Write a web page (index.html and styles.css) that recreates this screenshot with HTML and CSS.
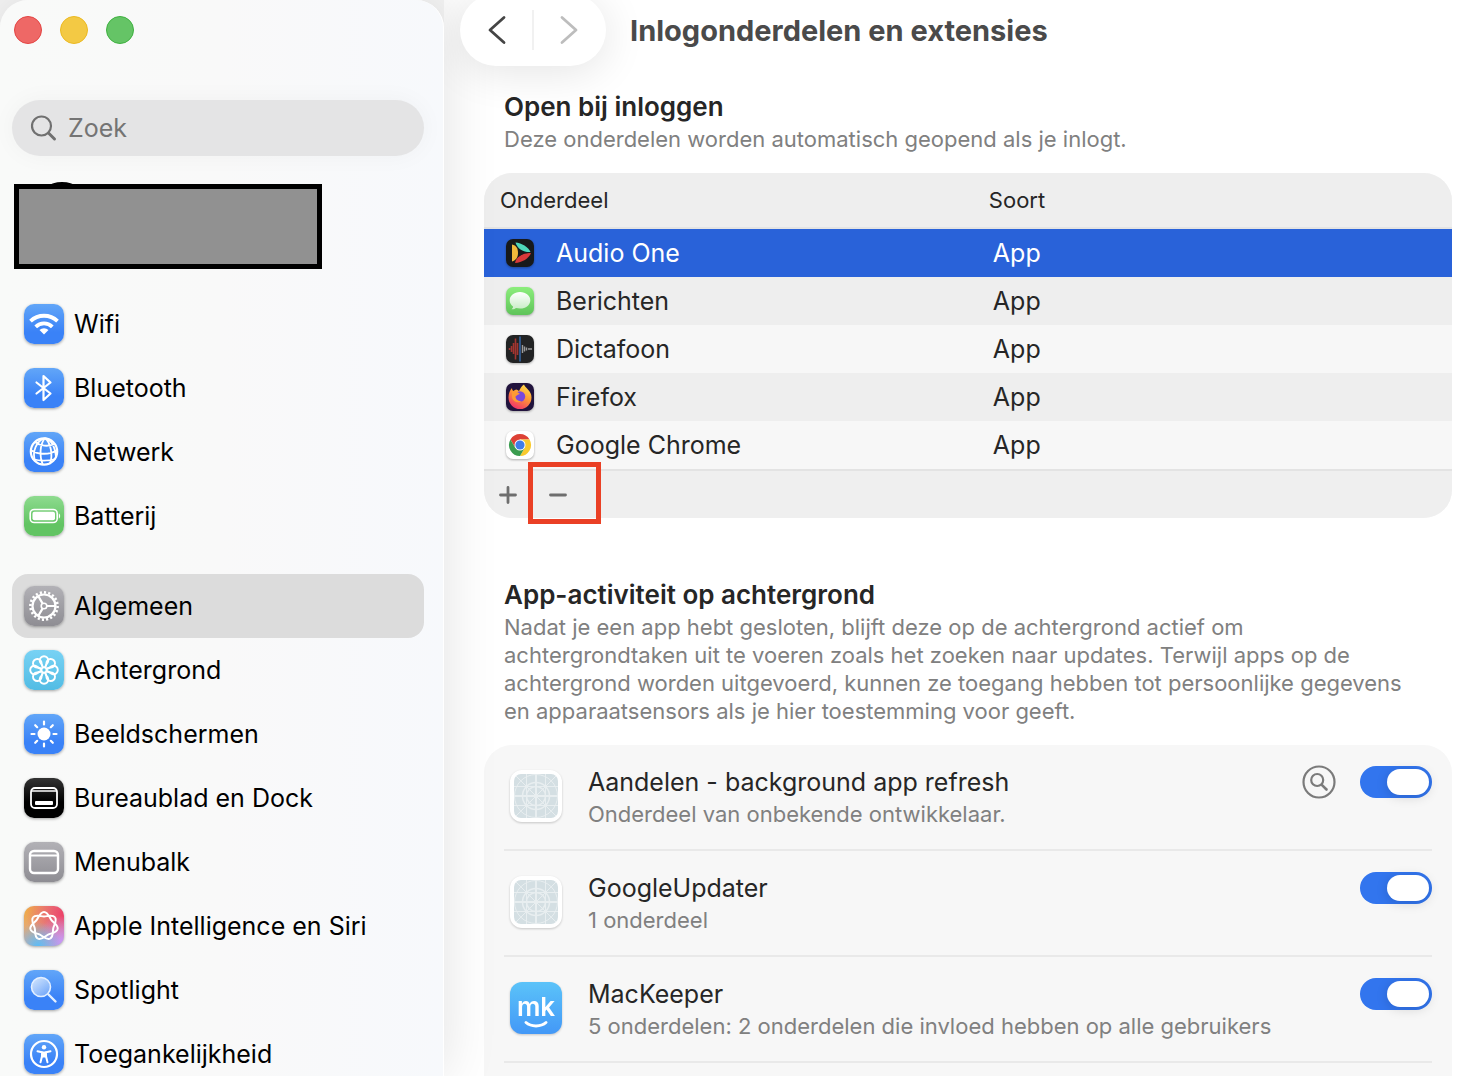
FILE: index.html
```html
<!DOCTYPE html>
<html lang="nl">
  <head>
    <meta charset="UTF-8" />
    <meta name="viewport" content="width=device-width, initial-scale=1.0" />
    <title>Inlogonderdelen en extensies</title>
    <link rel="stylesheet" href="styles.css">
  </head>
  <body>
    <aside class="sidebar">
      <div class="window-buttons">
        <button class="dot red" aria-label="Sluit"></button>
        <button class="dot yellow" aria-label="Minimaliseer"></button>
        <button class="dot green" aria-label="Vergroot"></button>
      </div>

      <label class="search">
        <svg width="28" height="28" viewBox="0 0 28 28" fill="none" stroke="#707070" stroke-width="2.200" stroke-linecap="round">
          <circle cx="11.500" cy="12" r="9.500" />
          <path d="M18.500 19l6 6" stroke-width="3" />
        </svg>
        <input type="search" placeholder="Zoek" aria-label="Zoek" />
      </label>

      <div class="account"></div>

      <nav>
        <ul class="menu">
          <li><a href="#wifi">
            <svg class="tile blue" viewBox="0 0 40 40" fill="none" stroke="#fff" stroke-width="3.800">
              <path d="M6.500 17.200a19.500 19.500 0 0 1 27 0M11.700 22.800a12 12 0 0 1 16.600 0" />
              <path d="M20 30.500l-4.500-4.500a6.500 6.500 0 0 1 9 0z" fill="#fff" stroke="none" />
            </svg>
            Wifi</a></li>
          <li><a href="#bluetooth">
            <svg class="tile blue" viewBox="0 0 40 40" fill="none" stroke="#fff" stroke-width="2.200" stroke-linejoin="round" stroke-linecap="round">
              <path d="M12.500 14.500l14 11-7 6.500v-24l7 6.500-14 11" />
            </svg>
            Bluetooth</a></li>
          <li><a href="#netwerk">
            <svg class="tile blue" viewBox="0 0 40 40" fill="none" stroke="#fff" stroke-width="1.800">
              <circle cx="20" cy="19.500" r="13.200" stroke-width="2.200" />
              <path d="M21 6c-5 6-6 18-2 27M21 6c-9 3-13 14-10 23M21 6c6 5 8 17 5 26M21 6c6 2 10 8 11 19M11 10c5 4 13 5 20 2M6.500 18c8 5 19 5 27 0M8.500 27c7 2 16 2 23 0" />
            </svg>
            Netwerk</a></li>
          <li><a href="#batterij">
            <svg class="tile lime" viewBox="0 0 40 40" fill="none" stroke="#fff">
              <rect x="6.200" y="13.500" width="27" height="13" rx="4" stroke-width="1.600" />
              <rect x="8.500" y="15.800" width="22.500" height="8.400" rx="2" fill="#fff" stroke="none" />
              <path d="M34.800 17.500v5c1.800-.5 1.800-4.500 0-5z" fill="#fff" stroke="none" />
            </svg>
            Batterij</a></li>
        </ul>

        <ul class="menu">
          <li><a href="#algemeen" class="active" aria-current="page">
            <svg class="tile gray" viewBox="0 0 40 40" fill="none" stroke="#fff">
              <circle cx="20" cy="20" r="11.500" stroke-width="2.200" />
              <circle cx="20" cy="20" r="13.600" stroke-width="2.600" pathLength="40" stroke-dasharray="1 1" />
              <circle cx="20" cy="20" r="2.800" stroke-width="1.600" />
              <path d="M23 20h8.500M18.500 17.400l-4.300-7.400M18.500 22.600l-4.300 7.400" stroke-width="2.200" />
            </svg>
            Algemeen</a></li>
          <li><a href="#achtergrond">
            <svg class="tile cyan" viewBox="0 0 40 40" fill="none" stroke="#fff" stroke-width="1.900">
              <g id="petals">
                <path id="petal" d="M20 20l-2.500-6a4.300 4.300 0 1 1 5 0z" />
                <use href="#petal" transform="rotate(45 20 20)" />
                <use href="#petal" transform="rotate(90 20 20)" />
                <use href="#petal" transform="rotate(135 20 20)" />
              </g>
              <use href="#petals" transform="rotate(180 20 20)" />
              <circle cx="20" cy="20" r="2.600" fill="#5fc6ea" />
            </svg>
            Achtergrond</a></li>
          <li><a href="#beeldschermen">
            <svg class="tile blue" viewBox="0 0 40 40" fill="none" stroke="#fff" stroke-width="2.200" stroke-linecap="round">
              <circle cx="20" cy="20" r="6.500" fill="#fff" stroke="none" />
              <path d="M20 7.500v3M20 29.500v3M7.500 20h3M29.500 20h3M11.200 11.200l2 2M26.800 26.800l2 2M11.200 28.800l2-2M26.800 13.200l2-2" />
            </svg>
            Beeldschermen</a></li>
          <li><a href="#dock">
            <svg class="tile black" viewBox="0 0 40 40" fill="none" stroke="#fff" stroke-width="1.800">
              <rect x="7" y="10" width="26" height="20" rx="4" />
              <path d="M7.500 13h25" stroke-width="1.400" />
              <rect x="11" y="23" width="18" height="4" rx="1" fill="#fff" stroke="none" />
            </svg>
            Bureaublad en Dock</a></li>
          <li><a href="#menubalk">
            <svg class="tile gray" viewBox="0 0 40 40" fill="none" stroke="#fff" stroke-width="2.400">
              <rect x="6" y="9" width="28" height="22" rx="4" />
              <path d="M6 13.500h28" stroke-width="2" />
            </svg>
            Menubalk</a></li>
          <li><a href="#siri">
            <svg class="tile siri" viewBox="0 0 40 40" fill="none" stroke="#fff" stroke-width="2">
              <g transform="translate(20 20)">
                <path id="lobe" d="M0-14C4-14 5.560-8.270 7.430-5.920C9.300-3.570 14.540-.78 13.650 3.120" />
                <use href="#lobe" transform="rotate(51.430)" />
                <use href="#lobe" transform="rotate(102.860)" />
                <use href="#lobe" transform="rotate(154.290)" />
                <use href="#lobe" transform="rotate(205.710)" />
                <use href="#lobe" transform="rotate(257.140)" />
                <use href="#lobe" transform="rotate(308.570)" />
              </g>
            </svg>
            Apple Intelligence en Siri</a></li>
          <li><a href="#spotlight">
            <svg class="tile blue" viewBox="0 0 40 40" fill="none" stroke="#e3efff" stroke-linecap="round">
              <defs>
                <linearGradient id="lens" x2="1" y2="1"><stop stop-color="#fff" stop-opacity=".75" /><stop offset="1" stop-color="#fff" stop-opacity=".2" /></linearGradient>
              </defs>
              <circle cx="17" cy="17" r="9.500" fill="url(#lens)" stroke-width="1.600" />
              <path d="M24.500 24.500l7 7" stroke-width="2.400" />
            </svg>
            Spotlight</a></li>
          <li><a href="#toegankelijkheid">
            <svg class="tile blue" viewBox="0 0 40 40" fill="none" stroke="#fff" stroke-width="2" stroke-linecap="round" stroke-linejoin="round">
              <circle cx="20" cy="20" r="13" stroke-width="2.200" />
              <circle cx="20" cy="13.200" r="2.200" fill="#fff" stroke="none" />
              <path d="M13.500 17.200l4.500 1v4l-1.500 6M26.500 17.200l-4.500 1v4l1.500 6" />
              <path d="M17.500 17.500h5l-.5 6h-4z" fill="#fff" stroke="none" />
            </svg>
            Toegankelijkheid</a></li>
        </ul>
      </nav>
    </aside>

    <main class="main">
      <header class="toolbar">
        <div class="history">
          <button aria-label="Vorige">
            <svg width="20" height="30" viewBox="0 0 20 30" fill="none" stroke="#454545" stroke-width="2.800" stroke-linecap="round" stroke-linejoin="round"><path d="M18 2.500L4 15l14 12.500" /></svg>
          </button>
          <button aria-label="Volgende">
            <svg width="20" height="30" viewBox="0 0 20 30" fill="none" stroke="#bdbdbd" stroke-width="2.800" stroke-linecap="round" stroke-linejoin="round"><path d="M2 2.500L16 15L2 27.500" /></svg>
          </button>
        </div>
        <h1>Inlogonderdelen en extensies</h1>
      </header>

      <section class="section">
        <div class="section-head">
          <h2>Open bij inloggen</h2>
          <p>Deze onderdelen worden automatisch geopend als je inlogt.</p>
        </div>
        <div class="login-items">
          <div class="card">
            <table>
              <thead>
                <tr><th class="name-col">Onderdeel</th><th>Soort</th></tr>
              </thead>
              <tbody>
                <tr class="selected">
                  <td><div class="app">
                    <svg class="app-icon" viewBox="0 0 32 32">
                      <rect x="2" y="2" width="28" height="28" rx="7" fill="#17191b" />
                      <path d="M8 7.500c4.500 1 6 4 6 8.500s-2 7-6 8.500z" fill="#f2b93b" />
                      <path d="M11.500 5.500c6 .5 13 4.500 15 9.500-6 .5-13-2.500-15-9.500z" fill="#4fd8bb" />
                      <path d="M27 16c-2 5.500-9 9.500-16 10 1-6.500 8-10 16-10z" fill="#d8393a" />
                      <path d="M14 12.500l6.500 3.500-6.500 4z" fill="#17191b" />
                    </svg>
                    Audio One</div></td>
                  <td>App</td>
                </tr>
                <tr>
                  <td><div class="app">
                    <svg class="app-icon" viewBox="0 0 32 32">
                      <defs>
                        <linearGradient id="msg" x2="0" y2="1"><stop stop-color="#8cee7c" /><stop offset="1" stop-color="#5fc45a" /></linearGradient>
                        <linearGradient id="bubble" x2="0" y2="1"><stop stop-color="#fff" /><stop offset="1" stop-color="#c8edc6" /></linearGradient>
                      </defs>
                      <rect x="2" y="2" width="28" height="28" rx="7" fill="url(#msg)" />
                      <path d="M16 7c-6 0-10.300 3.700-10.300 8.300 0 2.700 1.200 4.800 3.300 6.300.2 1-.5 2-1.500 2.700 1.800.2 3.500-.3 4.500-1.200 1.200.3 2.600.5 4 .5 6 0 10.300-3.700 10.300-8.300S22 7 16 7z" fill="url(#bubble)" />
                    </svg>
                    Berichten</div></td>
                  <td>App</td>
                </tr>
                <tr>
                  <td><div class="app">
                    <svg class="app-icon" viewBox="0 0 32 32" fill="none">
                      <rect x="2" y="2" width="28" height="28" rx="7" fill="#222324" />
                      <path d="M5.500 15v2M7.500 13v6M9.500 10v11M11.500 5.500v21M13.500 10v12" stroke="#a23530" stroke-width="1.600" />
                      <path d="M16 3.500v25" stroke="#3b78c9" stroke-width="1.200" />
                      <path d="M18.500 12v8M20.500 13.500v5M22.500 14.500v3M24 16h4" stroke="#9b9b9b" stroke-width="1.400" />
                    </svg>
                    Dictafoon</div></td>
                  <td>App</td>
                </tr>
                <tr>
                  <td><div class="app">
                    <svg class="app-icon" viewBox="0 0 32 32">
                      <defs>
                        <linearGradient id="fox" x1=".8" x2=".3" y2="1"><stop stop-color="#ffe14d" /><stop offset=".45" stop-color="#ff9a35" /><stop offset="1" stop-color="#f0316b" /></linearGradient>
                      </defs>
                      <rect x="2" y="2" width="28" height="28" rx="7" fill="#21133d" />
                      <path d="M20 3.500c1 3.500 7.500 6 7.500 13A11.500 11.500 0 0 1 16 28 11.500 11.500 0 0 1 4.500 16.500c0-4 1.500-7.500 3.500-9.500 0 1.500.5 2.500 1.500 3 2-2 3.500-2 5.500 0 1.500-3 2.500-5 5-6.500z" fill="url(#fox)" />
                      <circle cx="16" cy="15.500" r="5.200" fill="#7a48dc" />
                      <path d="M8 10.500c3-1 6 .5 8 2.500-2.500.3-3 1.700-4.500 2.500 0 3 3 5 6 4.500-4 3-9.500 0-9.500-4.500z" fill="#ff9a34" />
                    </svg>
                    Firefox</div></td>
                  <td>App</td>
                </tr>
                <tr>
                  <td><div class="app">
                    <svg class="app-icon" viewBox="0 0 32 32">
                      <rect x="2" y="2" width="28" height="28" rx="7" fill="#fff" />
                      <g transform="translate(16 16)">
                        <path d="M0-5.500H9.530A11 11 0 0 0-9.530-5.500L-4.760 2.750z" fill="#dd4135" />
                        <path d="M0-5.500H9.530A11 11 0 0 0-9.530-5.500L-4.760 2.750z" fill="#f9ca2e" transform="rotate(120)" />
                        <path d="M0-5.500H9.530A11 11 0 0 0-9.530-5.500L-4.760 2.750z" fill="#3a9c4f" transform="rotate(240)" />
                        <circle r="5.500" fill="#fff" />
                        <circle r="4.600" fill="#3f7de8" />
                      </g>
                    </svg>
                    Google Chrome</div></td>
                  <td>App</td>
                </tr>
              </tbody>
            </table>
            <div class="card-footer">
              <button aria-label="Voeg toe">
                <svg width="20" height="20" viewBox="0 0 20 20" stroke="#6e6e6e" stroke-width="2.800" stroke-linecap="round"><path d="M2.500 10h15M10 2.500v15" /></svg>
              </button>
              <button aria-label="Verwijder">
                <svg width="20" height="20" viewBox="0 0 20 20" stroke="#6e6e6e" stroke-width="2.800" stroke-linecap="round"><path d="M2.500 10h15" /></svg>
              </button>
            </div>
          </div>
          <div class="highlight"></div>
        </div>
      </section>

      <section class="section">
        <div class="section-head">
          <h2>App-activiteit op achtergrond</h2>
          <p>Nadat je een app hebt gesloten, blijft deze op de achtergrond actief om achtergrondtaken uit te voeren zoals het zoeken naar updates. Terwijl apps op de achtergrond worden uitgevoerd, kunnen ze toegang hebben tot persoonlijke gegevens en apparaatsensors als je hier toestemming voor geeft.</p>
        </div>
        <ul class="card activity">
          <li>
            <svg class="activity-icon" viewBox="0 0 64 64" fill="none">
              <g id="blueprint">
                <rect x="6" y="6" width="52" height="52" rx="12" fill="#fff" />
                <rect x="10" y="10" width="44" height="44" rx="7" fill="#d4dfe3" />
                <g stroke="#e8eef0">
                  <path d="M10 22.500h44M10 41.500h44M22.500 10v44M41.500 10v44M12 12l40 40M52 12L12 52" />
                  <path d="M10 32h44M32 10v44" stroke-width="2" />
                  <circle cx="32" cy="32" r="21.500" />
                  <circle cx="32" cy="32" r="13.500" stroke-width="1.500" />
                  <circle cx="32" cy="32" r="9.500" stroke-width="1.500" />
                </g>
              </g>
            </svg>
            <div class="activity-text">
              <label for="aandelen">Aandelen - background app refresh</label>
              <p>Onderdeel van onbekende ontwikkelaar.</p>
            </div>
            <div class="controls">
              <button class="reveal" aria-label="Toon in Finder">
                <svg width="34" height="34" viewBox="0 0 34 34" fill="none" stroke="#7b7b7b" stroke-width="2.200" stroke-linecap="round">
                  <circle cx="17" cy="17" r="15.500" />
                  <circle cx="15.200" cy="15" r="6" />
                  <path d="M19.800 19.800l4.700 4.700" stroke-width="2.600" />
                </svg>
              </button>
              <input type="checkbox" role="switch" class="toggle" id="aandelen" checked />
            </div>
          </li>
          <li>
            <svg class="activity-icon" viewBox="0 0 64 64" fill="none"><use href="#blueprint" /></svg>
            <div class="activity-text">
              <label for="updater">GoogleUpdater</label>
              <p>1 onderdeel</p>
            </div>
            <div class="controls">
              <input type="checkbox" role="switch" class="toggle" id="updater" checked />
            </div>
          </li>
          <li>
            <svg class="activity-icon" viewBox="0 0 64 64" fill="none">
              <defs>
                <linearGradient id="keeper" x2="0" y2="1"><stop stop-color="#5bc3f9" /><stop offset="1" stop-color="#4398f7" /></linearGradient>
              </defs>
              <rect x="6" y="6" width="52" height="52" rx="12" fill="url(#keeper)" />
              <text x="32" y="40" class="keeper-logo">mk</text>
              <path d="M22 46.500c5 4.500 15 4.500 20 0" stroke="#fff" stroke-width="3" stroke-linecap="round" />
            </svg>
            <div class="activity-text">
              <label for="mackeeper">MacKeeper</label>
              <p>5 onderdelen: 2 onderdelen die invloed hebben op alle gebruikers</p>
            </div>
            <div class="controls">
              <input type="checkbox" role="switch" class="toggle" id="mackeeper" checked />
            </div>
          </li>
        </ul>
      </section>
    </main>
  </body>
</html>
```

FILE: styles.css
```css
* {
  box-sizing: border-box;
  margin: 0;
  padding: 0;
}

body {
  font-family: Inter, "Liberation Sans", sans-serif;
  font-size: 25px;
  background-color: #f4f4f4;
  display: flex;
  height: 100vh;
  overflow: hidden;
  color: #262626;
}

button {
  border: none;
  background: none;
  display: flex;
  align-items: center;
  justify-content: center;
}

ul {
  list-style: none;
}

/* Sidebar */

.sidebar {
  width: 444px;
  flex-shrink: 0;
  padding: 16px 19px 0 12px;
  overflow: hidden;
  background: linear-gradient(to right, #f9faf9, #f9f9f9 50%, #f7f9fc);
  border-right: 1px solid #fff;
  border-radius: 28px 28px 0 0;
  box-shadow: 0 0 56px rgba(0, 0, 0, 0.12);
  position: relative;
  z-index: 1;
}

.window-buttons {
  display: flex;
  gap: 18px;
  padding-left: 2px;
  margin-bottom: 56px;
}

.dot {
  width: 28px;
  height: 28px;
  border-radius: 50%;
}

.red {
  background: #ee6866;
  border: 1px solid #e34544;
}

.yellow {
  background: #f3c944;
  border: 1px solid #ebb922;
}

.green {
  background: #65c466;
  border: 1px solid #3fb141;
}

.search {
  display: flex;
  align-items: center;
  gap: 10px;
  height: 56px;
  padding: 0 18px;
  border-radius: 28px;
  background: #e4e4e5;
  box-shadow: 0 0 24px rgba(0, 0, 0, 0.04);
}

.search input {
  flex: 1;
  min-width: 0;
  border: none;
  outline: none;
  background: none;
  font: inherit;
}

.search input::placeholder {
  color: #747474;
}

.account {
  width: 308px;
  height: 85px;
  margin: 28px 0 23px 2px;
  border: 5px solid #000;
  background: #919191;
  position: relative;
}

/* top of the avatar sticking out above the box */
.account::before {
  content: "";
  position: absolute;
  left: 31px;
  top: -7px;
  width: 24px;
  height: 4px;
  border-radius: 50% 50% 0 0 / 100% 100% 0 0;
  background: #000;
}

.menu + .menu {
  margin-top: 26px;
}

.menu a {
  display: flex;
  align-items: center;
  gap: 10px;
  height: 64px;
  padding: 0 12px;
  border-radius: 16px;
  color: #000;
  text-decoration: none;
}

.menu .active {
  background: #dcdcdc;
}

.tile {
  width: 40px;
  height: 40px;
  border-radius: 10px;
  box-shadow: 0 1px 3px rgba(0, 0, 0, 0.35);
}

.blue {
  background: linear-gradient(#62a6f8, #3a82f7 70%);
}

.lime {
  background: linear-gradient(#8edb8f, #62c463 70%);
}

.gray {
  background: linear-gradient(#b2b1b6, #8e8d93);
}

.cyan {
  background: linear-gradient(#78d2f4, #52bce4);
}

.black {
  background: linear-gradient(#333, #000 60%);
}

.siri {
  background:
    radial-gradient(circle at 35% 100%, #5cbcf5, transparent 50%),
    radial-gradient(circle at 95% 90%, #c897f8, transparent 50%),
    radial-gradient(circle at 100% 20%, #ee3f66, transparent 75%),
    radial-gradient(circle at 0 0, #f3ab3c, transparent 75%),
    #d9a8a8;
}

/* Main */

.main {
  flex: 1;
  min-width: 0;
  padding: 0 12px 0 40px;
  background: #fff;
  overflow: hidden;
}

.toolbar {
  display: flex;
  align-items: center;
  gap: 24px;
  height: 60px;
  margin: 0 0 29px -24px;
}

.toolbar h1 {
  font-size: 29px;
  font-weight: 700;
  color: #4a4a4a;
}

.history {
  display: flex;
  align-items: center;
  width: 146px;
  height: 72px;
  flex-shrink: 0;
  border-radius: 36px;
  background: #fff;
  box-shadow: 0 6px 44px rgba(0, 0, 0, 0.11);
  position: relative;
  z-index: 2;
}

.history button {
  flex: 1;
  height: 40px;
}

.history button + button {
  border-left: 2px solid #f1f1f1;
}

.section {
  margin-bottom: 59px;
}

.section-head {
  padding: 0 20px;
  margin-bottom: 20px;
}

h2 {
  font-size: 26px;
  font-weight: 600;
  line-height: 36px;
}

p {
  font-size: 22px;
  line-height: 28px;
  color: #808080;
}

.card {
  border-radius: 28px;
  background: #f7f7f7;
  overflow: hidden;
}

.login-items {
  position: relative;
}

table {
  width: 100%;
  table-layout: fixed;
  border-collapse: separate;
  border-spacing: 0;
}

th {
  height: 56px;
  padding: 0 16px;
  font-size: 22px;
  font-weight: 400;
  text-align: left;
  background: #eee;
  border-bottom: 2px solid #e3e3e3;
}

.name-col {
  width: 50.5%;
}

td {
  height: 48px;
  padding: 0 20px;
}

tbody tr:nth-child(even) {
  background: #eee;
}

tbody .selected {
  background: #2962d9;
  color: #fff;
}

.app {
  display: flex;
  align-items: center;
  gap: 20px;
}

.app-icon {
  width: 32px;
  height: 32px;
  filter: drop-shadow(0 1px 1px rgba(0, 0, 0, 0.3));
}

.card-footer {
  display: flex;
  align-items: center;
  gap: 30px;
  height: 49px;
  padding: 0 14px;
  background: #efefef;
  border-top: 2px solid #e3e3e3;
}

.highlight {
  position: absolute;
  left: 44px;
  bottom: -6px;
  width: 73px;
  height: 62px;
  border: 5px solid #ea4025;
  pointer-events: none;
}

.activity {
  padding: 0 20px 60px;
}

.activity li {
  display: flex;
  align-items: flex-start;
  gap: 20px;
  padding: 19px 0 21px;
  border-bottom: 2px solid #e9e9e9;
}

.activity-icon {
  width: 64px;
  height: 64px;
  flex-shrink: 0;
  filter: drop-shadow(0 1px 1px rgba(0, 0, 0, 0.2));
}

.keeper-logo {
  font-size: 26px;
  font-weight: 600;
  text-anchor: middle;
  fill: #fff;
}

.activity-text {
  flex: 1;
  min-width: 0;
}

.activity-text label {
  display: block;
  line-height: 36px;
}

.controls {
  display: flex;
  align-items: center;
  gap: 24px;
  height: 36px;
}

.toggle {
  appearance: none;
  width: 72px;
  height: 32px;
  padding: 3px;
  border-radius: 16px;
  background: #d5d5d5;
  display: flex;
}

.toggle::before {
  content: "";
  width: 42px;
  height: 26px;
  border-radius: 13px;
  background: #fff;
  box-shadow: 0 2px 12px rgba(0, 0, 0, 0.15);
}

.toggle:checked {
  background: #3275ee;
  justify-content: flex-end;
}
```
